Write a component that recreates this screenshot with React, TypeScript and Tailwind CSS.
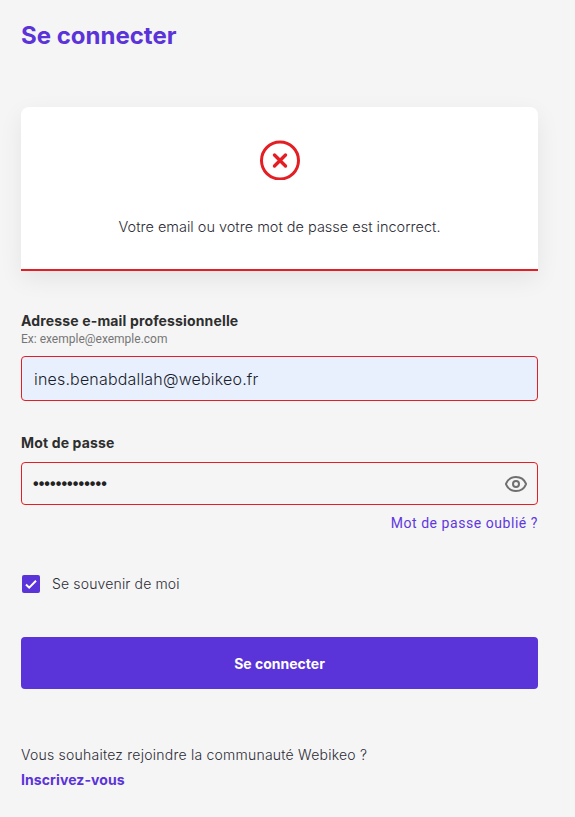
import { Eye } from 'lucide-react';

const lexend = "font-['Inter',sans-serif]";

export default function App() {
  return (
    <div className={`min-h-[817px] w-[575px] bg-[#f5f5f5] pl-[21px] pr-[37px] pt-[21px] text-[#2e2e2e] ${lexend}`}>
      <h1 className="h-[30px] text-[24px] font-bold leading-[30px] text-[#5a33d9]">Se connecter</h1>

      <div className="mt-[56px] flex h-[164px] flex-col items-center rounded-t-[8px] border-b-2 border-[#e31e24] bg-white pt-[33px] shadow-[0_8px_24px_rgba(0,0,0,0.07)]">
        <svg width="40" height="40" viewBox="0 0 40 40" fill="none" stroke="#e31e24">
          <circle cx="20" cy="20.5" r="18.5" strokeWidth="3" />
          <path d="M14.5 15l11 11M25.5 15l-11 11" strokeWidth="3.4" strokeLinecap="round" />
        </svg>
        <p className="mt-[37px] text-[14.5px] font-light leading-[20px] text-[#2c2c36]">Votre email ou votre mot de passe est incorrect.</p>
      </div>

      <label className="mt-[41px] block text-[14px] font-bold leading-[18px] tracking-[0.15px]">Adresse e-mail professionnelle</label>
      <p className="mt-[1px] font-['Roboto',sans-serif] text-[12px] leading-[16px] text-[#757575]">Ex: exemple@exemple.com</p>
      <div className="mt-[9px] flex h-[45px] items-center rounded-[4px] border border-[#e31e24] bg-[#e8f0fe] pl-[12px] text-[16px] font-light tracking-[0.18px] text-[#1a1d2b]">
        ines.benabdallah@webikeo.fr
      </div>

      <label className="mt-[33px] block text-[14px] font-bold leading-[18px] tracking-[0.15px]">Mot de passe</label>
      <div className="mt-[10px] flex h-[43px] items-center justify-between rounded-[4px] border border-[#e31e24] pl-[11px] pr-[9px]">
        <span className="font-['Liberation_Sans',sans-serif] text-[16px] font-bold tracking-[0.08px] text-[#222]">•••••••••••••</span>
        <Eye className="h-[24px] w-[24px] text-[#6f6f6f]" strokeWidth={2} />
      </div>
      <div className="mt-[10px] text-right font-['Roboto',sans-serif] text-[14px] leading-[16px] tracking-[0.55px] text-[#6038e0]">
        Mot de passe oublié ?
      </div>

      <div className="mt-[44px] flex items-center gap-[12px]">
        <span className="ml-[1px] flex h-[18px] w-[18px] items-center justify-center rounded-[2px] bg-[#5a33d9]">
          <svg width="14" height="14" viewBox="0 0 14 14" fill="none" stroke="white" strokeWidth="2">
            <path d="M2 7.5l3.2 3.2L12 3.8" />
          </svg>
        </span>
        <span className="text-[14px] font-light leading-[18px] tracking-[0.15px] text-[#2c2c36]">Se souvenir de moi</span>
      </div>

      <button className="mt-[44px] block h-[52px] w-full rounded-[4px] bg-[#5a33d9] text-[14px] font-bold text-white">
        Se connecter
      </button>

      <p className="mt-[57px] text-[14px] font-light leading-[18px] tracking-[0.23px] text-[#2c2c36]">Vous souhaitez rejoindre la communauté Webikeo ?</p>
      <p className="mt-[7px] text-[14px] font-bold leading-[18px] tracking-[0.1px] text-[#5a33d9]">Inscrivez-vous</p>
    </div>
  );
}
